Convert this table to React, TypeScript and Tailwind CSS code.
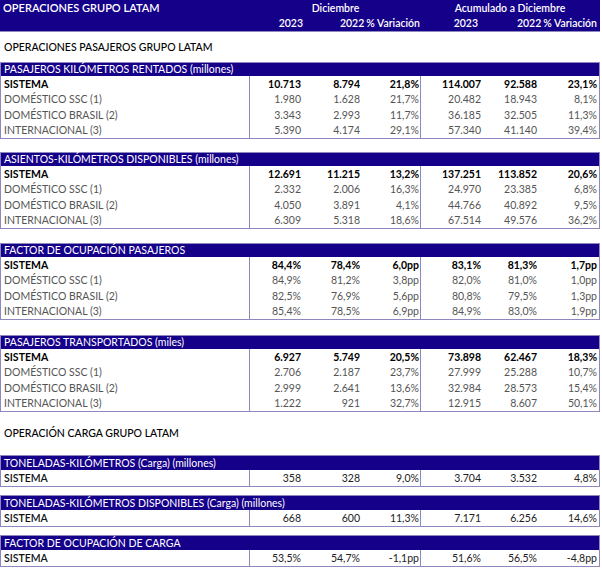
import React from "react";

type Row = { label: string; v: string[]; bold?: boolean };
type Section = { title: string; rows: Row[] };

const L = "border-[#8f88bf]";

const passenger: Section[] = [
  {
    title: "PASAJEROS KILÓMETROS RENTADOS (millones)",
    rows: [
      { label: "SISTEMA", v: ["10.713", "8.794", "21,8%", "114.007", "92.588", "23,1%"], bold: true },
      { label: "DOMÉSTICO SSC (1)", v: ["1.980", "1.628", "21,7%", "20.482", "18.943", "8,1%"] },
      { label: "DOMÉSTICO BRASIL (2)", v: ["3.343", "2.993", "11,7%", "36.185", "32.505", "11,3%"] },
      { label: "INTERNACIONAL (3)", v: ["5.390", "4.174", "29,1%", "57.340", "41.140", "39,4%"] },
    ],
  },
  {
    title: "ASIENTOS-KILÓMETROS DISPONIBLES (millones)",
    rows: [
      { label: "SISTEMA", v: ["12.691", "11.215", "13,2%", "137.251", "113.852", "20,6%"], bold: true },
      { label: "DOMÉSTICO SSC (1)", v: ["2.332", "2.006", "16,3%", "24.970", "23.385", "6,8%"] },
      { label: "DOMÉSTICO BRASIL (2)", v: ["4.050", "3.891", "4,1%", "44.766", "40.892", "9,5%"] },
      { label: "INTERNACIONAL (3)", v: ["6.309", "5.318", "18,6%", "67.514", "49.576", "36,2%"] },
    ],
  },
  {
    title: "FACTOR DE OCUPACIÓN PASAJEROS",
    rows: [
      { label: "SISTEMA", v: ["84,4%", "78,4%", "6,0pp", "83,1%", "81,3%", "1,7pp"], bold: true },
      { label: "DOMÉSTICO SSC (1)", v: ["84,9%", "81,2%", "3,8pp", "82,0%", "81,0%", "1,0pp"] },
      { label: "DOMÉSTICO BRASIL (2)", v: ["82,5%", "76,9%", "5,6pp", "80,8%", "79,5%", "1,3pp"] },
      { label: "INTERNACIONAL (3)", v: ["85,4%", "78,5%", "6,9pp", "84,9%", "83,0%", "1,9pp"] },
    ],
  },
  {
    title: "PASAJEROS TRANSPORTADOS (miles)",
    rows: [
      { label: "SISTEMA", v: ["6.927", "5.749", "20,5%", "73.898", "62.467", "18,3%"], bold: true },
      { label: "DOMÉSTICO SSC (1)", v: ["2.706", "2.187", "23,7%", "27.999", "25.288", "10,7%"] },
      { label: "DOMÉSTICO BRASIL (2)", v: ["2.999", "2.641", "13,6%", "32.984", "28.573", "15,4%"] },
      { label: "INTERNACIONAL (3)", v: ["1.222", "921", "32,7%", "12.915", "8.607", "50,1%"] },
    ],
  },
];

const cargo: Section[] = [
  {
    title: "TONELADAS-KILÓMETROS (Carga) (millones)",
    rows: [{ label: "SISTEMA", v: ["358", "328", "9,0%", "3.704", "3.532", "4,8%"] }],
  },
  {
    title: "TONELADAS-KILÓMETROS DISPONIBLES (Carga) (millones)",
    rows: [{ label: "SISTEMA", v: ["668", "600", "11,3%", "7.171", "6.256", "14,6%"] }],
  },
  {
    title: "FACTOR DE OCUPACIÓN DE CARGA",
    rows: [{ label: "SISTEMA", v: ["53,5%", "54,7%", "-1,1pp", "51,6%", "56,5%", "-4,8pp"] }],
  },
];

function DataRow({ row, cargoRow }: { row: Row; cargoRow?: boolean }) {
  const h = cargoRow ? "h-[16px]" : "h-[15.5px]";
  const labelCls = row.bold
    ? "font-bold text-black"
    : cargoRow
    ? "font-semibold text-[#111]"
    : "text-[#555]";
  const numCls = row.bold ? "font-bold text-black" : cargoRow ? "text-[#222]" : "text-[#555]";
  return (
    <div className={`flex ${h} items-center`}>
      <div className={`w-[249px] h-full flex items-center pl-[3px] border-r ${L} ${labelCls}`}>{row.label}</div>
      <div className={`w-[52px] text-right pr-[1px] ${numCls}`}>{row.v[0]}</div>
      <div className={`w-[59px] text-right pr-[1px] ${numCls}`}>{row.v[1]}</div>
      <div className={`w-[60px] h-full flex items-center justify-end pr-[1px] border-r ${L} ${numCls}`}>{row.v[2]}</div>
      <div className={`w-[61px] text-right pr-[1px] ${numCls}`}>{row.v[3]}</div>
      <div className={`w-[56px] text-right pr-[1px] ${numCls}`}>{row.v[4]}</div>
      <div className={`w-[60px] text-right pr-[1px] ${numCls}`}>{row.v[5]}</div>
    </div>
  );
}

function Block({ s, cargoBlock, mt }: { s: Section; cargoBlock?: boolean; mt: string }) {
  return (
    <div className={`${mt} w-[600px] border-l border-r border-t border-b ${L}`}>
      <div
        className={`bg-[#15008a] text-white ${cargoBlock ? "h-[14px]" : "h-[13px]"} flex items-center pl-[3px] leading-none`}
      >
        {s.title}
      </div>
      {s.rows.map((r) => (
        <DataRow key={r.label} row={r} cargoRow={cargoBlock} />
      ))}
    </div>
  );
}

export default function App() {
  return (
    <div
      className="w-[602px] h-[568px] bg-white overflow-hidden text-[10.5px] leading-none"
      style={{ fontFamily: "Lato, 'Noto Sans', sans-serif" }}
    >
      {/* Top header */}
      <div className={`w-[600px] bg-[#15008a] text-white font-semibold border-b ${L}`}>
        <div className="flex h-[15.5px] items-center">
          <div className="w-[250px] pl-[3px] text-[11px]">OPERACIONES GRUPO LATAM</div>
          <div className="w-[171px] text-center">Diciembre</div>
          <div className="w-[178px] text-center">Acumulado a Diciembre</div>
        </div>
        <div className="flex h-[15.5px] items-center">
          <div className="w-[250px]" />
          <div className="w-[53px] text-right">2023</div>
          <div className="w-[118px] flex justify-end gap-[2px] pr-[1px]">
            <span>2022</span>
            <span>% Variación</span>
          </div>
          <div className="w-[61px] text-right pr-[4px]">2023</div>
          <div className="w-[116px] flex justify-end gap-[2px] pr-[1px]">
            <span>2022</span>
            <span>% Variación</span>
          </div>
        </div>
      </div>

      <div className="h-[30px] flex items-center pl-[4px] font-medium text-black text-[10.5px]">
        OPERACIONES PASAJEROS GRUPO LATAM
      </div>

      <Block s={passenger[0]} mt="mt-0" />
      <Block s={passenger[1]} mt="mt-[13px]" />
      <Block s={passenger[2]} mt="mt-[14px]" />
      <Block s={passenger[3]} mt="mt-[15px]" />

      <div className="h-[43px] flex items-center pl-[4px] font-medium text-black text-[10.5px]">
        OPERACIÓN CARGA GRUPO LATAM
      </div>

      <Block s={cargo[0]} cargoBlock mt="mt-0" />
      <Block s={cargo[1]} cargoBlock mt="mt-[8px]" />
      <Block s={cargo[2]} cargoBlock mt="mt-[8px]" />
    </div>
  );
}
